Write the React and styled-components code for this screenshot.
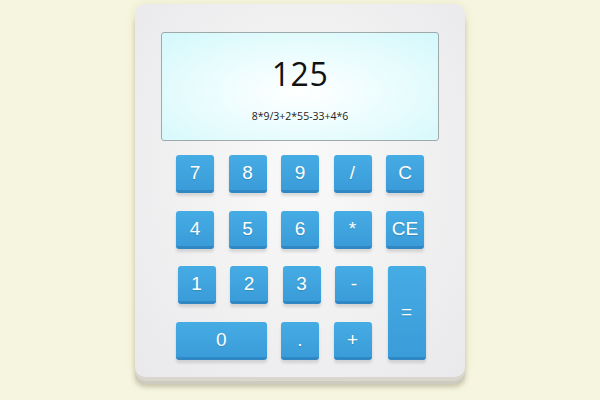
import React from "react";
import styled, { createGlobalStyle } from "styled-components";

const Global = createGlobalStyle`
  html, body { margin: 0; padding: 0; }
  body {
    width: 600px; height: 400px; overflow: hidden;
    background: #f6f5df;
    font-family: "Open Sans", "Liberation Sans", sans-serif;
  }
`;

const Page = styled.div`
  display: flex;
  justify-content: center;
  padding-top: 4px;
`;

const Body = styled.div`
  width: 330px;
  height: 373px;
  box-sizing: border-box;
  padding: 28px 26px 0 26px;
  border-radius: 10px;
  background: radial-gradient(ellipse at 50% 45%, #fafafa 0%, #f0f0f1 55%, #e9e9ec 100%);
  box-shadow: 0 4px 0 #d9d7cd, 0 7px 0 #cdcbbf, 0 10px 5px rgba(140, 135, 105, 0.45),
    0 0 10px rgba(200, 190, 140, 0.25);
  display: flex;
  flex-direction: column;
  align-items: stretch;
`;

const Display = styled.div`
  height: 109px;
  box-sizing: border-box;
  border: 1px solid #9fa9aa;
  border-radius: 3px;
  background: radial-gradient(ellipse at 50% 55%, #ffffff 0%, #eefdfe 40%, #d3f8fb 100%);
  display: flex;
  flex-direction: column;
  align-items: center;
`;

const Result = styled.div`
  margin-top: 19px;
  font-size: 32px;
  line-height: 44px;
  color: #111;
  letter-spacing: 0.5px;
`;

const Expr = styled.div`
  margin-top: 13px;
  font-size: 10.5px;
  line-height: 14px;
  color: #222;
`;

const Keypad = styled.div`
  margin: 14px 0 0 15px;
  display: grid;
  grid-template-columns: repeat(5, 38px);
  grid-template-rows: repeat(4, 38px);
  column-gap: 14.5px;
  row-gap: 17.5px;
`;

const Key = styled.div`
  grid-column: ${(p) => p.$col || "auto"};
  grid-row: ${(p) => p.$row || "auto"};
  box-sizing: border-box;
  border-radius: 3px;
  background: linear-gradient(#46ace4, #3a9cd9);
  border-bottom: 3px solid #2f88c4;
  box-shadow: 0 3px 3px rgba(0, 0, 0, 0.12);
  color: #ffffff;
  font-family: "Liberation Sans", Arial, sans-serif;
  font-size: 19px;
  display: flex;
  align-items: center;
  justify-content: center;
  padding-top: 1px;
  margin-left: ${(p) => (p.$shift ? "1.5px" : "0")};
  margin-right: ${(p) => (p.$shift ? "-1.5px" : "0")};
  text-shadow: 0 1px 1px rgba(0, 0, 0, 0.15);
`;

export default function App() {
  return (
    <>
      <Global />
      <Page>
        <Body>
          <Display>
            <Result>125</Result>
            <Expr>8*9/3+2*55-33+4*6</Expr>
          </Display>
          <Keypad>
            <Key>7</Key>
            <Key>8</Key>
            <Key>9</Key>
            <Key>/</Key>
            <Key>C</Key>
            <Key>4</Key>
            <Key>5</Key>
            <Key>6</Key>
            <Key>*</Key>
            <Key>CE</Key>
            <Key $shift>1</Key>
            <Key $shift>2</Key>
            <Key $shift>3</Key>
            <Key $shift>-</Key>
            <Key $shift $col="5" $row="3 / span 2">=</Key>
            <Key $col="1 / span 2" $row="4">0</Key>
            <Key $col="3" $row="4">.</Key>
            <Key $col="4" $row="4">+</Key>
          </Keypad>
        </Body>
      </Page>
    </>
  );
}
